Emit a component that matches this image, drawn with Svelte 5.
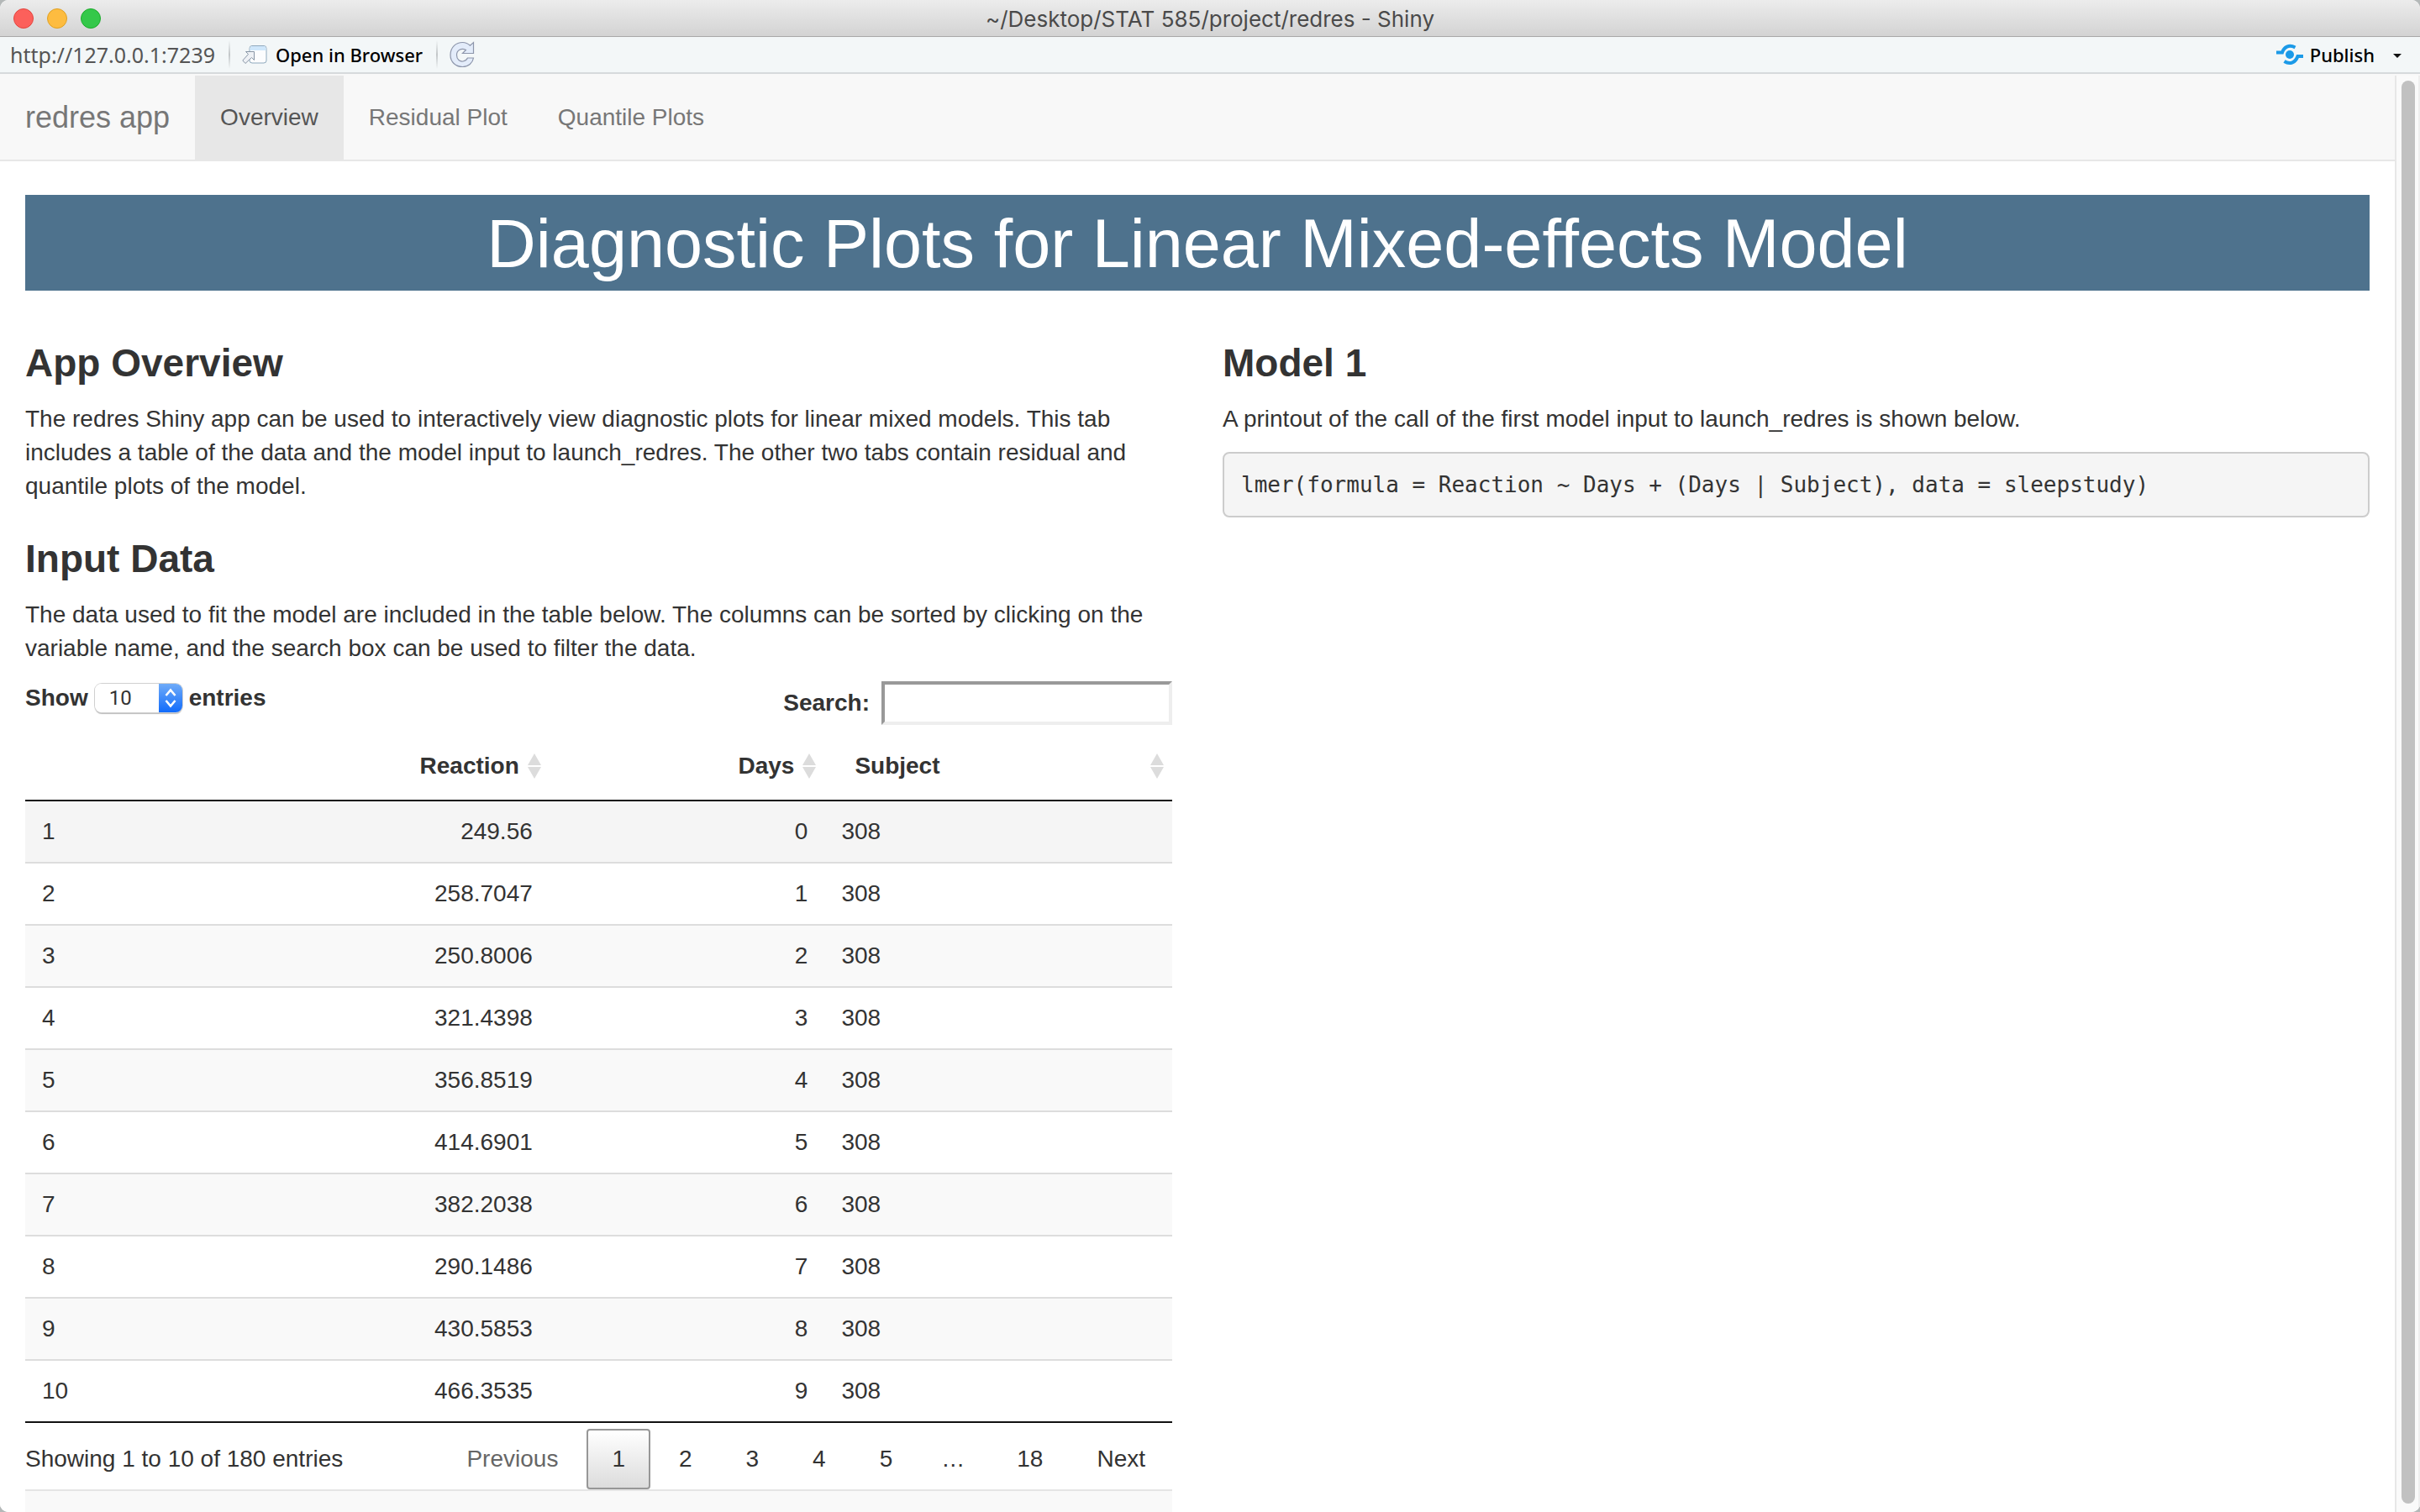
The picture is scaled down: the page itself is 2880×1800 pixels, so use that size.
<script>
  const tabs = ['Overview', 'Residual Plot', 'Quantile Plots'];
  let active = $state('Overview');
  let pageLength = $state('10');
  let query = $state('');

  const reactions = [
    '249.56', '258.7047', '250.8006', '321.4398', '356.8519',
    '414.6901', '382.2038', '290.1486', '430.5853', '466.3535',
  ];
  const rows = reactions.map((reaction, i) => ({ id: i + 1, reaction, days: i, subject: 308 }));
  const pages = [1, 2, 3, 4, 5];
</script>

{#snippet sorter()}
  <svg class="sort" viewBox="0 0 16 30" aria-hidden="true">
    <path d="M8 0L16 14H0ZM0 16H16L8 30Z" fill="#dcdcdc" />
  </svg>
{/snippet}

<div class="backdrop">
  <div class="window">
    <header class="titlebar">
      <div class="lights">
        <button class="light close" aria-label="Close"></button>
        <button class="light minimize" aria-label="Minimize"></button>
        <button class="light zoom" aria-label="Zoom"></button>
      </div>
      <span class="title">~/Desktop/STAT 585/project/redres - Shiny</span>
      <div class="spacer"></div>
    </header>

    <div class="toolbar">
      <span class="url">http://127.0.0.1:7239</span>
      <span class="divider"></span>
      <button class="tool">
        <svg class="open-icon" viewBox="0 0 30 24" aria-hidden="true">
          <rect x="9" y="1.500" width="20" height="20.500" rx="3" fill="#fcfdfe" stroke="#8fa9bd" />
          <path d="M9.500 7V4.500Q9.500 2 12 2H26Q28.500 2 28.500 4.500V7Z" fill="#cfe7fb" />
          <path d="M4.500 8.500H14.500V18.500L11.500 15.500L4 22.500L.8 19L7.500 11.500Z" fill="#eef1f5" stroke="#8795a5" />
        </svg>
        <span>Open in Browser</span>
      </button>
      <span class="divider"></span>
      <button class="tool" aria-label="Reload">
        <svg class="reload-icon" viewBox="0 0 30 32" aria-hidden="true">
          <path d="M28.500 1.500V14.500H15.500L19.500 10.500C14 7.500 8.500 11 8.500 16.500C8.500 22 12.500 24.500 16 24C19 23.600 20.500 22 21.500 20H28.500C27.500 26 22.500 30.500 15.500 30.500C7 30.500 1 24.500 1 16.500C1 7 8 1.500 15.500 1.500C19 1.500 22 2.800 24.500 5.200Z" fill="#e3ecfa" stroke="#8d96ab" stroke-width="1.200" />
        </svg>
      </button>
      <button class="tool publish">
        <svg class="publish-icon" viewBox="0 0 32 26" aria-hidden="true">
          <circle cx="16" cy="13" r="5" fill="#1b9ae8" />
          <path d="M0 10.500H7C9 4 15 .5 22.500 4.500M32 15H25.500C23 22 16.500 25.500 9.500 21" fill="none" stroke="#1b9ae8" stroke-width="4" />
        </svg>
        <span>Publish</span>
        <svg class="caret" viewBox="0 0 10 5" aria-hidden="true"><path d="M0 0H10L5 5Z" fill="#111" /></svg>
      </button>
    </div>

    <div class="viewport">
      <main>
        <nav>
          <a class="brand" href="#top">redres app</a>
          {#each tabs as tab}
            <a class="tab" class:active={active === tab} href="#{tab}" onclick={() => (active = tab)}>{tab}</a>
          {/each}
        </nav>

        <div class="content">
          <h1>Diagnostic Plots for Linear Mixed-effects Model</h1>

          <div class="columns">
            <section>
              <h3>App Overview</h3>
              <p>
                The redres Shiny app can be used to interactively view diagnostic plots for linear mixed models. This tab
                includes a table of the data and the model input to launch_redres. The other two tabs contain residual and
                quantile plots of the model.
              </p>
              <h3>Input Data</h3>
              <p>
                The data used to fit the model are included in the table below. The columns can be sorted by clicking on the
                variable name, and the search box can be used to filter the data.
              </p>

              <div class="controls">
                <label class="length">
                  Show
                  <span class="select">
                    <select bind:value={pageLength}>
                      <option>10</option>
                      <option>25</option>
                      <option>50</option>
                      <option>100</option>
                    </select>
                    <svg class="stepper" viewBox="0 0 28 34" aria-hidden="true">
                      <path d="M8.500 14L14 7.500L19.500 14M8.500 20L14 26.500L19.500 20" fill="none" stroke="#fff" stroke-width="2.600" />
                    </svg>
                  </span>
                  entries
                </label>
                <label class="search">
                  Search:
                  <input type="search" bind:value={query} />
                </label>
              </div>

              <table>
                <colgroup>
                  <col class="c-id" /><col class="c-reaction" /><col class="c-days" /><col class="c-subject" />
                </colgroup>
                <thead>
                  <tr>
                    <th></th>
                    <th class="num"><span class="head">Reaction {@render sorter()}</span></th>
                    <th class="num"><span class="head">Days {@render sorter()}</span></th>
                    <th><span class="head spread">Subject {@render sorter()}</span></th>
                  </tr>
                </thead>
                <tbody>
                  {#each rows as row}
                    <tr>
                      <td>{row.id}</td>
                      <td class="num">{row.reaction}</td>
                      <td class="num">{row.days}</td>
                      <td>{row.subject}</td>
                    </tr>
                  {/each}
                </tbody>
              </table>

              <div class="footer">
                <span>Showing 1 to 10 of 180 entries</span>
                <div class="pager">
                  <button class="page" disabled>Previous</button>
                  {#each pages as n}
                    <button class="page" class:current={n === 1}>{n}</button>
                  {/each}
                  <span class="ellipsis">…</span>
                  <button class="page">18</button>
                  <button class="page">Next</button>
                </div>
              </div>
              <div class="well"></div>
            </section>

            <section>
              <h3>Model 1</h3>
              <p>A printout of the call of the first model input to launch_redres is shown below.</p>
              <pre>lmer(formula = Reaction ~ Days + (Days | Subject), data = sleepstudy)</pre>
            </section>
          </div>
        </div>
      </main>
      <div class="track"><div class="thumb"></div></div>
    </div>
  </div>
</div>

<style>
  :global(body) {
    margin: 0;
  }
  * {
    box-sizing: border-box;
  }
  button,
  input,
  select {
    font: inherit;
    color: inherit;
    margin: 0;
  }
  button {
    padding: 0;
    border: 0;
    background: none;
  }
  .backdrop {
    height: 100vh;
    background: #b4b8b8;
  }
  .window {
    height: 100%;
    display: flex;
    flex-direction: column;
    overflow: hidden;
    border-radius: 10px;
    background: #fff;
    color: #333;
    font: 28px/40px 'Liberation Sans', Arial, sans-serif;
  }

  .titlebar {
    display: grid;
    grid-template-columns: 1fr auto 1fr;
    align-items: center;
    height: 44px;
    flex: none;
    padding: 0 16px;
    background: linear-gradient(#ececec, #d3d3d3);
    border-bottom: 1px solid #a9a9a9;
  }
  .title {
    font: 26px/40px Inter, sans-serif;
    color: #4a4a4a;
    padding-top: 3px;
  }
  .lights {
    display: flex;
    gap: 16px;
  }
  .light {
    width: 24px;
    height: 24px;
    border-radius: 50%;
    border: 1px solid;
  }
  .close {
    background: #fc605b;
    border-color: #e2463f;
  }
  .minimize {
    background: #fdbc40;
    border-color: #dfa023;
  }
  .zoom {
    background: #34c84a;
    border-color: #1dab2c;
  }

  .toolbar {
    display: flex;
    align-items: center;
    height: 44px;
    flex: none;
    padding: 0 30px 0 12px;
    background: #f3f7f8;
    border-bottom: 2px solid #d6dadc;
    font: 25px/40px 'Noto Sans', 'Open Sans', sans-serif;
  }
  .url {
    color: #555;
  }
  .divider {
    width: 2px;
    height: 34px;
    margin: 0 14px 0 16px;
    background: linear-gradient(#f3f7f8, #c2c6c8, #f3f7f8);
  }
  .tool {
    display: flex;
    align-items: center;
    font-size: 22px;
    font-weight: 500;
    color: #000;
  }
  .open-icon {
    width: 30px;
    height: 24px;
    margin-right: 10px;
  }
  .reload-icon {
    width: 30px;
    height: 32px;
  }
  .publish {
    margin-left: auto;
  }
  .publish-icon {
    width: 32px;
    height: 26px;
    margin-right: 8px;
  }
  .caret {
    width: 10px;
    height: 5px;
    margin: 2px 0 0 22px;
  }
  .publish .caret {
    margin-right: -8px;
  }

  .viewport {
    flex: 1;
    min-height: 0;
    display: flex;
    padding-top: 2px;
    background: #f8f8f8;
  }
  main {
    flex: 1;
    min-width: 0;
    overflow: hidden;
    background: #fff;
  }
  .track {
    flex: none;
    width: 30px;
    padding: 6px 4px 10px 6px;
    background: #fafafa;
    border-left: 2px solid #e7e7e7;
    border-right: 2px solid #eee;
  }
  .thumb {
    width: 16px;
    height: 100%;
    border-radius: 8px;
    background: #c1c1c1;
  }

  nav {
    display: flex;
    height: 102px;
    background: #f8f8f8;
    border-bottom: 2px solid #e7e7e7;
  }
  nav a {
    display: flex;
    align-items: center;
    padding: 0 30px;
    color: #777;
    text-decoration: none;
  }
  .brand {
    font-size: 36px;
  }
  nav .active {
    color: #555;
    background: #e7e7e7;
  }

  .content {
    padding: 40px 30px 0;
  }
  h1 {
    margin: 0 0 20px;
    padding-top: 2px;
    background: #4e728d;
    color: #fff;
    font-size: 81px;
    font-weight: 400;
    line-height: 112px;
    text-align: center;
  }
  .columns {
    display: grid;
    grid-template-columns: 1fr 1fr;
    gap: 60px;
  }
  section {
    min-width: 0;
  }
  h3 {
    margin: 40px 0 20px;
    font-size: 46px;
    font-weight: 700;
    line-height: 53px;
  }
  p {
    margin: 0 0 19px;
  }
  pre {
    margin: 0;
    padding: 19px 20px;
    background: #f5f5f5;
    border: 2px solid #ccc;
    border-radius: 8px;
    font: 26px/36px 'DejaVu Sans Mono', monospace;
  }

  .controls {
    display: flex;
    justify-content: space-between;
    align-items: flex-start;
    font-weight: 700;
  }
  .length,
  .search {
    display: flex;
    align-items: center;
    gap: 8px;
  }
  .search {
    gap: 14px;
  }
  .search input {
    width: 346px;
    height: 52px;
    padding: 2px 8px;
    border: 4px solid;
    border-color: #999 #eee #eee #999;
    background: #fff;
    outline: none;
    font-weight: 400;
    appearance: none;
  }
  .select {
    display: flex;
    height: 34px;
    border-radius: 8px;
    overflow: hidden;
    box-shadow: 0 0 0 1px #d0d0d0, 0 2px 1px #bbb;
  }
  .select select {
    appearance: none;
    width: 76px;
    padding: 0 0 0 17px;
    border: 0;
    background: #fff;
    font: 24px/34px Roboto, sans-serif;
  }
  .stepper {
    width: 28px;
    height: 34px;
    background: linear-gradient(#6fabf8, #116bfb);
  }

  table {
    width: 100%;
    margin-top: 9px;
    table-layout: fixed;
    border-collapse: separate;
    border-spacing: 0;
    border-bottom: 2px solid #111;
  }
  .c-id {
    width: 23%;
  }
  .c-reaction {
    width: 22.7%;
  }
  .c-days {
    width: 24%;
  }
  .c-subject {
    width: 30.3%;
  }
  th {
    padding: 20px 10px 20px 36px;
    text-align: left;
    border-bottom: 2px solid #111;
  }
  td {
    padding: 16px 20px;
    border-top: 2px solid #ddd;
  }
  .num {
    text-align: right;
  }
  .head {
    display: flex;
    align-items: center;
    justify-content: flex-end;
    gap: 10px;
  }
  .spread {
    justify-content: space-between;
  }
  .sort {
    width: 16px;
    height: 30px;
  }
  tbody tr:nth-child(odd) {
    background: #f9f9f9;
  }
  tbody tr:first-child {
    background: #f5f5f5;
  }
  tbody tr:first-child td {
    border-top: 0;
  }

  .footer {
    display: flex;
    justify-content: space-between;
    align-items: center;
    padding: 7px 2px 0 0;
  }
  .pager {
    display: flex;
    gap: 4px;
  }
  .page {
    height: 72px;
    padding: 0 28px;
    border: 2px solid transparent;
    border-radius: 4px;
  }
  .page:disabled {
    color: #666;
  }
  .current {
    border-color: #979797;
    background: linear-gradient(#fff, #dcdcdc);
  }
  .ellipsis {
    padding: 16px 28px;
    margin-left: -4px;
  }
  .well {
    height: 80px;
    background: #f9f9f9;
    border-top: 2px solid #e5e5e5;
  }
</style>
